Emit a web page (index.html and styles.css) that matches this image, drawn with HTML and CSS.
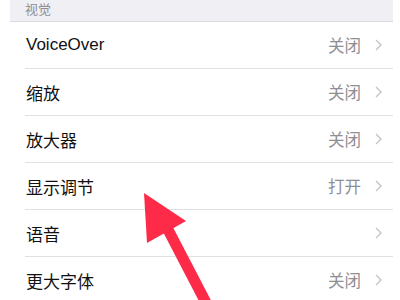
FILE: index.html
```html
<!DOCTYPE html>
<html lang="zh-CN">
<head>
<meta charset="utf-8">
<link rel="stylesheet" href="styles.css">
</head>
<body>
<div class="page">
  <div class="section-header">视觉</div>
  <div class="list">
    <div class="row"><span class="label">VoiceOver</span><span class="value">关闭</span><svg class="chev" width="7" height="12" viewBox="0 0 7 12"><polyline points="1,1 6,6 1,11" /></svg></div>
    <div class="row"><span class="label">缩放</span><span class="value">关闭</span><svg class="chev" width="7" height="12" viewBox="0 0 7 12"><polyline points="1,1 6,6 1,11" /></svg></div>
    <div class="row"><span class="label">放大器</span><span class="value">关闭</span><svg class="chev" width="7" height="12" viewBox="0 0 7 12"><polyline points="1,1 6,6 1,11" /></svg></div>
    <div class="row"><span class="label">显示调节</span><span class="value">打开</span><svg class="chev" width="7" height="12" viewBox="0 0 7 12"><polyline points="1,1 6,6 1,11" /></svg></div>
    <div class="row"><span class="label">语音</span><span class="value"></span><svg class="chev" width="7" height="12" viewBox="0 0 7 12"><polyline points="1,1 6,6 1,11" /></svg></div>
    <div class="row"><span class="label">更大字体</span><span class="value">关闭</span><svg class="chev" width="7" height="12" viewBox="0 0 7 12"><polyline points="1,1 6,6 1,11" /></svg></div>
  </div>
  <svg class="arrow" width="400" height="300" viewBox="0 0 400 300">
    <line x1="163" y1="220" x2="215" y2="320" stroke="#fe2b48" stroke-width="11" />
    <polygon points="144,193 186,221 147,243" fill="#fe2b48" />
  </svg>
</div>
</body>
</html>
```
FILE: styles.css
```css
html, body {
  margin: 0;
  padding: 0;
  background: #ffffff;
}
.page {
  position: relative;
  width: 400px;
  height: 300px;
  overflow: hidden;
  font-family: "Liberation Sans", "Noto Sans CJK SC", sans-serif;
}
.section-header {
  margin: 0 7px 0 10px;
  height: 21px;
  background: #efeff4;
  border-bottom: 1px solid #d9d9de;
  padding-left: 15px;
  font-family: "Noto Sans CJK SC", sans-serif;
  font-size: 13px;
  line-height: 18px;
  color: #8e8e93;
}
.list {
  margin: 0 7px 0 25px;
}
.row {
  display: flex;
  align-items: center;
  height: 46px;
  border-bottom: 1px solid #e0e0e4;
  padding-right: 11px;
}
.label {
  flex: 1;
  font-size: 17px;
  color: #111111;
  padding-left: 1px;
}
.value {
  font-family: "Noto Sans CJK SC", sans-serif;
  font-size: 16.5px;
  color: #8e8e93;
  margin-right: 14px;
}
.chev {
  display: block;
}
.chev polyline {
  fill: none;
  stroke: #c4c4c9;
  stroke-width: 1.4;
}
.arrow {
  position: absolute;
  left: 0;
  top: 0;
}
```
